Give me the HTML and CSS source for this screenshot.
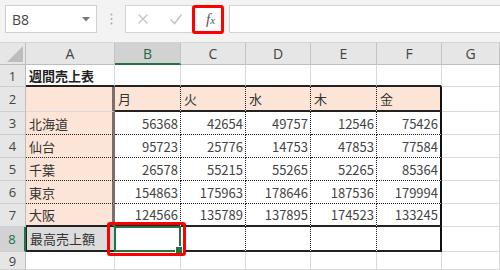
FILE: index.html
```html
<!DOCTYPE html>
<html lang="ja">
<head>
    <meta charset="UTF-8">
    <title>週間売上表</title>
    <link rel="stylesheet" href="styles.css">
</head>
<body>

    <!-- Name box and formula bar -->
    <div class="toolbar">
        <div class="namebox">
            <span>B8</span>
            <svg class="arrow" width="8" height="5" viewBox="0 0 8 5"><path d="M0 0h8L4 4.5z" fill="#777"/></svg>
        </div>
        <div class="sep">
            <svg width="3" height="12" viewBox="0 0 3 12"><circle cx="1.5" cy="1.5" r="1" fill="#aaa"/><circle cx="1.5" cy="6" r="1" fill="#aaa"/><circle cx="1.5" cy="10.5" r="1" fill="#aaa"/></svg>
        </div>
        <div class="fbtns">
            <svg class="btn" width="12" height="12" viewBox="0 0 12 12"><path d="M1.5 1.5l9 9M10.5 1.5l-9 9" stroke="#c4c4c4" stroke-width="1.4"/></svg>
            <svg class="btn" width="14" height="12" viewBox="0 0 14 12"><path d="M1.5 6.5l4 4 7-9" stroke="#c4c4c4" stroke-width="1.5" fill="none"/></svg>
            <span class="fx"><i>f</i><small>x</small></span>
            <div class="mark-fx"></div>
        </div>
        <div class="formula"></div>
    </div>

    <!-- Sheet grid -->
    <div class="sheet">
        <div class="corner"><svg width="16" height="16" viewBox="0 0 16 16"><path d="M16 0v16H0z" fill="#bdbdbd"/></svg></div>
        <div class="ch">A</div>
        <div class="ch sel">B</div>
        <div class="ch">C</div>
        <div class="ch">D</div>
        <div class="ch">E</div>
        <div class="ch">F</div>
        <div class="ch">G</div>

        <div class="rh">1</div>
        <div class="c bt title">週間売上表</div>
        <div class="c bt"></div>
        <div class="c bt"></div>
        <div class="c bt"></div>
        <div class="c bt"></div>
        <div class="c bt"></div>
        <div class="c"></div>

        <div class="rh">2</div>
        <div class="c pk rg"></div>
        <div class="c pk rd bt">月</div>
        <div class="c pk rd bt">火</div>
        <div class="c pk rd bt">水</div>
        <div class="c pk rd bt">木</div>
        <div class="c pk rt bt">金</div>
        <div class="c"></div>

        <div class="rh">3</div>
        <div class="c pk rg bd">北海道</div>
        <div class="c num rd bd">56368</div>
        <div class="c num rd bd">42654</div>
        <div class="c num rd bd">49757</div>
        <div class="c num rd bd">12546</div>
        <div class="c num rt bd">75426</div>
        <div class="c"></div>

        <div class="rh">4</div>
        <div class="c pk rg bd">仙台</div>
        <div class="c num rd bd">95723</div>
        <div class="c num rd bd">25776</div>
        <div class="c num rd bd">14753</div>
        <div class="c num rd bd">47853</div>
        <div class="c num rt bd">77584</div>
        <div class="c"></div>

        <div class="rh">5</div>
        <div class="c pk rg bd">千葉</div>
        <div class="c num rd bd">26578</div>
        <div class="c num rd bd">55215</div>
        <div class="c num rd bd">55265</div>
        <div class="c num rd bd">52265</div>
        <div class="c num rt bd">85364</div>
        <div class="c"></div>

        <div class="rh">6</div>
        <div class="c pk rg bd">東京</div>
        <div class="c num rd bd">154863</div>
        <div class="c num rd bd">175963</div>
        <div class="c num rd bd">178646</div>
        <div class="c num rd bd">187536</div>
        <div class="c num rt bd">179994</div>
        <div class="c"></div>

        <div class="rh">7</div>
        <div class="c pk rg bt">大阪</div>
        <div class="c num rd bt">124566</div>
        <div class="c num rd bt">135789</div>
        <div class="c num rd bt">137895</div>
        <div class="c num rd bt">174523</div>
        <div class="c num rt bt">133245</div>
        <div class="c"></div>

        <div class="rh rsel">8</div>
        <div class="c gr bt">最高売上額</div>
        <div class="c rd bt active">
            <div class="cursor"></div>
            <div class="mark-cell"></div>
        </div>
        <div class="c rd bt"></div>
        <div class="c rd bt"></div>
        <div class="c rd bt"></div>
        <div class="c rt bt"></div>
        <div class="c"></div>

        <div class="rh">9</div>
        <div class="c"></div>
        <div class="c"></div>
        <div class="c"></div>
        <div class="c"></div>
        <div class="c"></div>
        <div class="c"></div>
        <div class="c"></div>
    </div>

</body>
</html>
```

FILE: styles.css
```css
* {
    box-sizing: border-box;
}
body {
    margin: 0;
    width: 500px;
    height: 270px;
    overflow: hidden;
    background-color: #fff;
    font-family: "Noto Sans CJK JP", "Noto Sans", sans-serif;
    font-size: 13px;
    color: #333;
}
/* Formula bar */
.toolbar {
    display: flex;
    align-items: flex-start;
    height: 43px;
    padding: 5px 0 0 5px;
    background-color: #f3f3f3;
    border-bottom: 1px solid #d4d4d4;
}
.namebox {
    display: flex;
    align-items: center;
    justify-content: space-between;
    width: 92px;
    height: 28px;
    padding: 0 6px 0 6px;
    background-color: #fff;
    border: 1px solid #cfcfcf;
    font-family: "Open Sans", "Noto Sans", sans-serif;
    font-size: 14px;
    color: #444;
}
.sep {
    display: flex;
    justify-content: center;
    align-items: center;
    width: 28px;
    height: 28px;
}
.fbtns {
    position: relative;
    display: flex;
    align-items: center;
    width: 98px;
    height: 28px;
    padding-left: 11px;
    gap: 20px;
    background-color: #fff;
    border: 1px solid #d4d4d4;
}
.fx {
    margin-left: 3px;
    font-family: "Liberation Serif", serif;
    font-size: 15px;
    color: #555;
}
.fx small {
    font-size: 11px;
    font-style: italic;
}
.mark-fx {
    position: absolute;
    left: 66px;
    top: -1px;
    width: 32px;
    height: 29px;
    border: 3px solid #f00;
    border-radius: 3px;
}
.formula {
    flex: 1;
    height: 28px;
    margin-left: 6px;
    background-color: #fff;
    border: 1px solid #d4d4d4;
    border-right: none;
}
/* Sheet */
.sheet {
    display: grid;
    grid-template-columns: 26px 89px 66px 65px 65px 66px 65px 1fr;
    grid-template-rows: 22px 22px 25px 23px 23px 23px 23px 23px 25px 18px;
}
.corner {
    display: flex;
    align-items: flex-end;
    justify-content: flex-end;
    padding: 0 2px 2px 0;
    background-color: #e6e6e6;
    border-right: 1px solid #bdbdbd;
    border-bottom: 1px solid #bdbdbd;
}
.ch {
    display: flex;
    align-items: center;
    justify-content: center;
    background-color: #e6e6e6;
    border-right: 1px solid #c4c4c4;
    border-bottom: 1px solid #bdbdbd;
    font-family: "Open Sans", "Noto Sans", sans-serif;
    font-size: 14px;
    color: #444;
}
.ch.sel {
    background-color: #d2d2d2;
    border-bottom: 2px solid #217346;
    color: #1e6b41;
}
.rh {
    display: flex;
    align-items: center;
    justify-content: center;
    background-color: #e6e6e6;
    border-right: 1px solid #bdbdbd;
    border-bottom: 1px solid #cfcfcf;
    font-family: "Open Sans", "Noto Sans", sans-serif;
    font-size: 13px;
    color: #444;
}
.rh.rsel {
    background-color: #d2d2d2;
    border-right: 2px solid #217346;
    color: #217346;
}
.c {
    display: flex;
    align-items: center;
    padding: 0 3px;
    border-right: 1px solid #dadada;
    border-bottom: 1px solid #dadada;
    white-space: nowrap;
}
.title {
    font-weight: bold;
    color: #222;
}
.num {
    justify-content: flex-end;
    padding-right: 2px;
    color: #444;
}
.pk {
    background-color: #fce4d6;
}
.gr {
    background-color: #dcdcdc;
    border-left: 1px solid #222;
}
/* Table borders */
.bt {
    border-bottom: 2px solid #222;
}
.bd {
    border-bottom: 1px dotted #222;
}
.rd {
    border-right: 1px dotted #222;
}
.rt {
    border-right: 2px solid #111;
}
.rg {
    border-right: 3px solid #7a706b;
}
/* Active cell */
.active {
    position: relative;
    overflow: visible;
}
.cursor {
    position: absolute;
    left: -1px;
    top: -1px;
    right: -1px;
    bottom: -2px;
    border: 2px solid #217346;
}
.cursor::after {
    content: "";
    position: absolute;
    right: -4px;
    bottom: -4px;
    width: 6px;
    height: 6px;
    background-color: #217346;
    border: 1px solid #fff;
}
.mark-cell {
    position: absolute;
    left: -8px;
    top: -5px;
    width: 79px;
    height: 34px;
    border: 3px solid #f00;
    border-radius: 3px;
}
```
